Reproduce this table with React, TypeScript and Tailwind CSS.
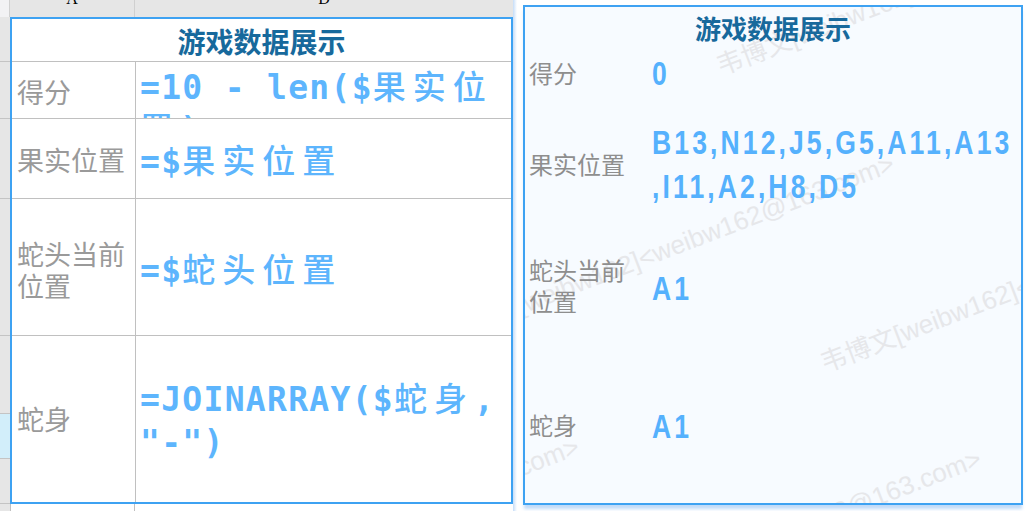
const cjkFont = "font-['Noto_Sans_CJK_SC','Noto_Sans',sans-serif]"
const monoFont = "font-['DejaVu_Sans_Mono','Noto_Sans_CJK_SC',monospace]"
const valueFont = "font-['Liberation_Sans','Noto_Sans_CJK_SC',sans-serif]"

function Cjk({ children }: { children: string }) {
  return <span className="font-medium tracking-[7px]">{children}</span>
}

// condensed bold value: Liberation Sans squeezed horizontally
function Value({ children }: { children: string }) {
  return (
    <span className="inline-block origin-left scale-x-[0.78] whitespace-nowrap tracking-[4px]">{children}</span>
  )
}

function Watermark({ className }: { className: string }) {
  return (
    <span
      className={
        "pointer-events-none absolute origin-top-left -rotate-[21deg] whitespace-nowrap text-[26px] leading-none text-[#e6e7ea] font-['Liberation_Sans','Noto_Sans_CJK_SC',sans-serif] " +
        className
      }
    >
      韦博文[weibw162]&lt;weibw162@163.com&gt;
    </span>
  )
}

function Sheet() {
  return (
    <div className="flex w-[513px] shrink-0 flex-col">
      {/* column header */}
      <div className="flex h-[17px] overflow-hidden bg-[#e6e6e6] font-['Liberation_Serif',serif] text-[16px] text-black">
        <div className="w-[10px] shrink-0 border-r border-[#d0d0d0] bg-[#f2f2f4]" />
        <div className="flex w-[125px] shrink-0 justify-center border-r border-[#d0d0d0]">
          <span className="-mt-[9px] leading-none">A</span>
        </div>
        <div className="flex flex-1 justify-center">
          <span className="-mt-[9px] leading-none">D</span>
        </div>
      </div>

      <div className="flex flex-1">
        {/* row header strip */}
        <div className="flex w-[10px] shrink-0 flex-col bg-[#e6e6e6]">
          <div className="h-[45px] border-b border-[#c4c4c4]" />
          <div className="h-[57px] border-b border-[#c4c4c4]" />
          <div className="h-[80px] border-b border-[#c4c4c4]" />
          <div className="h-[137px] border-b border-[#c4c4c4]" />
          <div className="h-[78px] border-b border-[#c4c4c4]" />
          <div className="h-[45px] border-b border-[#c4c4c4] bg-[#d2eefa]" />
          <div className="h-[45px] border-b border-[#c4c4c4]" />
          <div className="flex-1" />
        </div>

        <div className="flex flex-1 flex-col">
          <div className={"flex flex-col border-2 border-[#3ea2f2] bg-white " + cjkFont}>
            <div className="flex h-[43px] items-center justify-center border-b border-[#c0c0c0] pt-[1px] text-[28px] font-bold text-[#17699c]">
              游戏数据展示
            </div>
            <div className="flex h-[57px] overflow-hidden border-b border-[#c0c0c0]">
              <div className="flex w-[124px] shrink-0 items-center border-r border-[#c0c0c0] pl-[5px] pt-[4px] text-[27px] text-[#9a9a9a]">
                得分
              </div>
              <div className={"pl-[4px] pt-[5px] text-[33px] leading-[42px] font-bold tracking-[1.3px] text-[#5db5fd] " + monoFont}>
                =10 - len($<Cjk>果实位</Cjk>
                <br />
                <Cjk>置</Cjk>)
              </div>
            </div>
            <div className="flex h-[80px] border-b border-[#c0c0c0]">
              <div className="flex w-[124px] shrink-0 items-center border-r border-[#c0c0c0] pl-[5px] pt-[3px] text-[27px] text-[#9a9a9a]">
                果实位置
              </div>
              <div className={"flex items-center pl-[4px] pt-[6px] text-[33px] font-bold tracking-[1.3px] text-[#5db5fd] " + monoFont}>
                <span>
                  =$<Cjk>果实位置</Cjk>
                </span>
              </div>
            </div>
            <div className="flex h-[137px] border-b border-[#c0c0c0]">
              <div className="flex w-[124px] shrink-0 items-center border-r border-[#c0c0c0] pl-[5px] pt-[6px] text-[27px] leading-[32px] text-[#9a9a9a]">
                蛇头当前
                <br />
                位置
              </div>
              <div className={"flex items-center pl-[4px] pt-[8px] text-[33px] font-bold tracking-[1.3px] text-[#5db5fd] " + monoFont}>
                <span>
                  =$<Cjk>蛇头位置</Cjk>
                </span>
              </div>
            </div>
            <div className="flex h-[166px]">
              <div className="flex w-[124px] shrink-0 items-center border-r border-[#c0c0c0] pl-[5px] text-[27px] text-[#9a9a9a]">
                蛇身
              </div>
              <div className={"flex items-center pl-[4px] pt-[4px] text-[33px] leading-[43px] font-bold tracking-[1.3px] text-[#5db5fd] " + monoFont}>
                <span>
                  =JOINARRAY($<Cjk>蛇身</Cjk>,
                  <br />
                  "-")
                </span>
              </div>
            </div>
          </div>
          <div className="flex flex-1 border-l border-[#c0c0c0]">
            <div className="w-[124px] border-r border-[#c0c0c0]" />
          </div>
        </div>
      </div>
    </div>
  )
}

function Panel() {
  return (
    <div className="flex flex-1 bg-white pl-[6px] pt-[5px]">
      <div
        className={
          "relative flex h-[500px] w-[500px] flex-col overflow-hidden border-2 border-[#3ea2f2] bg-[#f7fbff] shadow-[0_5px_3px_-1px_rgba(120,175,240,0.45)] " +
          cjkFont
        }
      >
        <Watermark className="left-[188px] top-[48px]" />
        <Watermark className="left-[-85px] top-[315px]" />
        <Watermark className="left-[292px] top-[345px]" />
        <Watermark className="left-[-400px] top-[598px]" />
        <Watermark className="left-[2px] top-[610px]" />

        <div className="relative flex h-[40px] items-center justify-center text-[26px] font-bold text-[#17699c]">
          游戏数据展示
        </div>
        <div className="relative grid grid-cols-[123px_1fr] pl-[4px] text-[#8e8e8e]">
          <div className="flex h-[52px] items-center text-[24px]">得分</div>
          <div className={"flex h-[52px] items-center text-[34px] font-bold text-[#55b1fd] " + valueFont}>
            <Value>0</Value>
          </div>

          <div className="flex h-[130px] items-center text-[24px]">果实位置</div>
          <div className={"flex h-[130px] flex-col justify-center text-[34px] leading-[44px] font-bold text-[#55b1fd] " + valueFont}>
            <Value>B13,N12,J5,G5,A11,A13</Value>
            <Value>,I11,A2,H8,D5</Value>
          </div>

          <div className="flex h-[118px] items-center pb-[6px] text-[24px] leading-[31px]">
            蛇头当前
            <br />
            位置
          </div>
          <div className={"flex h-[118px] items-center text-[34px] font-bold text-[#55b1fd] " + valueFont}>
            <Value>A1</Value>
          </div>

          <div className="flex h-[156px] items-center text-[24px]">蛇身</div>
          <div className={"flex h-[156px] items-center pt-[3px] text-[34px] font-bold text-[#55b1fd] " + valueFont}>
            <Value>A1</Value>
          </div>
        </div>
      </div>
    </div>
  )
}

export default function App() {
  return (
    <div className="flex h-[511px] w-[1030px] overflow-hidden bg-white">
      <Sheet />
      <div className="w-[4px] shrink-0 bg-linear-to-r from-[#c6ddf8] to-white" />
      <Panel />
    </div>
  )
}
